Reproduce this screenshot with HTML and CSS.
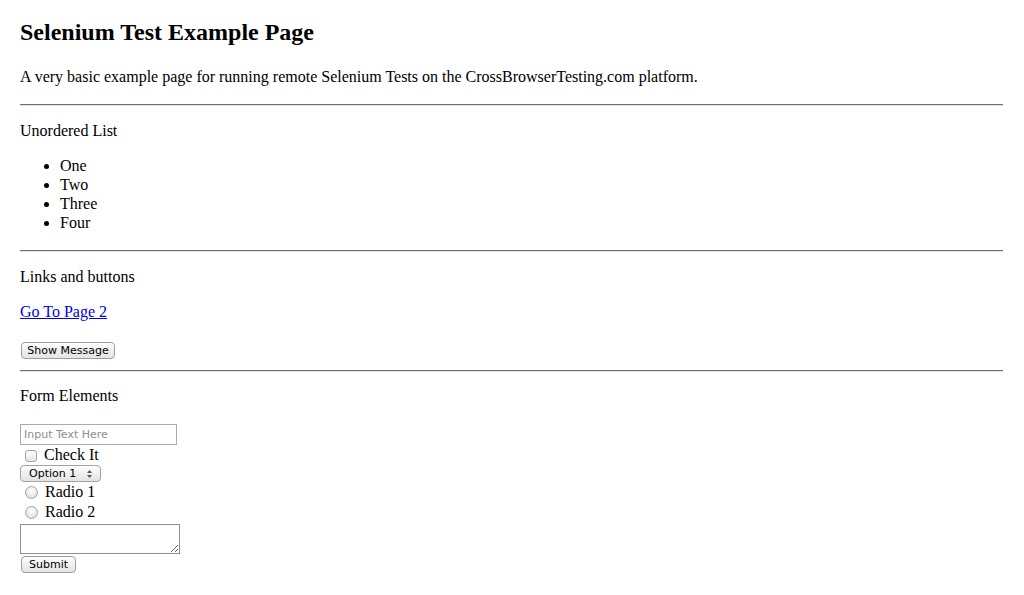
FILE: index.html
```html
<!DOCTYPE html>
<html>
<head>
<meta charset="utf-8">
<title>Selenium Test Example Page</title>
<link rel="stylesheet" href="styles.css">
</head>
<body>
<div class="page">
  <h1 class="title">Selenium Test Example Page</h1>
  <p class="text">A very basic example page for running remote Selenium Tests on the CrossBrowserTesting.com platform.</p>
  <hr class="rule">
  <p class="text">Unordered List</p>
  <ul class="list">
    <li>One</li>
    <li>Two</li>
    <li>Three</li>
    <li>Four</li>
  </ul>
  <hr class="rule">
  <p class="text">Links and buttons</p>
  <p class="text"><a class="link" href="#">Go To Page 2</a></p>
  <div class="btn-row"><button class="btn btn-show" type="button">Show Message</button></div>
  <hr class="rule rule-tight">
  <p class="text text-form">Form Elements</p>
  <form class="form">
    <input class="text-input" type="text" placeholder="Input Text Here">
    <label class="choice-row check-row"><input class="checkbox" type="checkbox"><span>Check It</span></label>
    <div class="select">
      <span class="select-label">Option 1</span>
      <svg class="select-arrows" width="5" height="8" viewBox="0 0 5 8"><path d="M2.5 0 L5 3 L0 3 Z M0 5 L5 5 L2.5 8 Z" fill="#555"/></svg>
    </div>
    <label class="choice-row radio-row"><input class="radio" type="radio" name="r"><span>Radio 1</span></label>
    <label class="choice-row radio-row"><input class="radio" type="radio" name="r"><span>Radio 2</span></label>
    <textarea class="textarea"></textarea>
    <button class="btn btn-submit" type="button">Submit</button>
  </form>
</div>
</body>
</html>
```
FILE: styles.css
```css
html, body {
  margin: 0;
  padding: 0;
  background: #fff;
}

body {
  font-family: "Liberation Serif", "Times New Roman", serif;
  font-size: 16px;
  line-height: 19px;
  color: #000;
}

.page {
  padding: 0 21px 0 20px;
}

.title {
  font-size: 24px;
  line-height: 28px;
  font-weight: bold;
  margin: 18px 0 21px;
}

.text {
  margin: 15px 0 16px;
}

.rule {
  height: 0;
  border: 0;
  border-top: 1px solid #6f6f6f;
  border-bottom: 1px solid #e2e2e2;
  margin: 18px 0 15px;
}

.rule-tight {
  margin-top: 11px;
  margin-bottom: 14px;
}

.text-form {
  margin-top: 14px;
}

.list {
  margin: 16px 0;
  padding-left: 40px;
}

.link {
  color: #0000ee;
  text-decoration: underline;
}

.btn-row {
  margin-top: 21px;
  display: flex;
}

.btn {
  font-family: "DejaVu Sans", "Liberation Sans", sans-serif;
  font-size: 11px;
  line-height: 15px;
  height: 17px;
  padding: 0;
  white-space: nowrap;
  text-align: center;
  border: 1px solid #9d9d9d;
  border-radius: 4px;
  background: linear-gradient(#ffffff, #f0f0f0 50%, #e4e4e4);
  color: #000;
  margin: 0 0 0 1px;
  box-sizing: border-box;
}

.btn-show {
  width: 94px;
}

.btn-submit {
  width: 55px;
  margin-top: 2px;
}

.form {
  display: flex;
  flex-direction: column;
  align-items: flex-start;
  margin-top: 19px;
}

.text-input {
  box-sizing: border-box;
  width: 157px;
  height: 21px;
  margin: 0;
  padding: 0 3px;
  border: 1px solid #ababab;
  font-family: "DejaVu Sans", "Liberation Sans", sans-serif;
  font-size: 11px;
  color: #000;
}

.text-input::placeholder {
  color: #8e8e8e;
}

.choice-row {
  display: flex;
  align-items: flex-start;
  height: 20px;
}

.choice-row span {
  line-height: 19px;
}

.checkbox {
  appearance: none;
  -webkit-appearance: none;
  width: 12px;
  height: 12px;
  margin: 5px 7px 0 5px;
  border: 1px solid #a3a3a3;
  border-radius: 3px;
  background: linear-gradient(#fdfdfd, #e6e6e6);
  box-sizing: border-box;
}

.select {
  box-sizing: border-box;
  width: 81px;
  height: 17px;
  display: flex;
  align-items: center;
  justify-content: space-between;
  padding: 0 8px 0 8px;
  border: 1px solid #a3a3a3;
  border-radius: 4px;
  background: linear-gradient(#ffffff, #f0f0f0 50%, #e4e4e4);
  font-family: "DejaVu Sans", "Liberation Sans", sans-serif;
  font-size: 11px;
}

.radio-row {
  height: 20px;
}

.radio {
  appearance: none;
  -webkit-appearance: none;
  width: 13px;
  height: 13px;
  margin: 4px 7px 0 5px;
  border: 1px solid #a5a5a5;
  border-radius: 50%;
  background: radial-gradient(circle at 50% 35%, #ffffff, #e8e8e8 60%, #d6d6d6);
  box-sizing: border-box;
}

.textarea {
  box-sizing: border-box;
  width: 160px;
  height: 30px;
  margin: 2px 0 0;
  border: 1px solid #8f8f8f;
  padding: 2px;
}
```
